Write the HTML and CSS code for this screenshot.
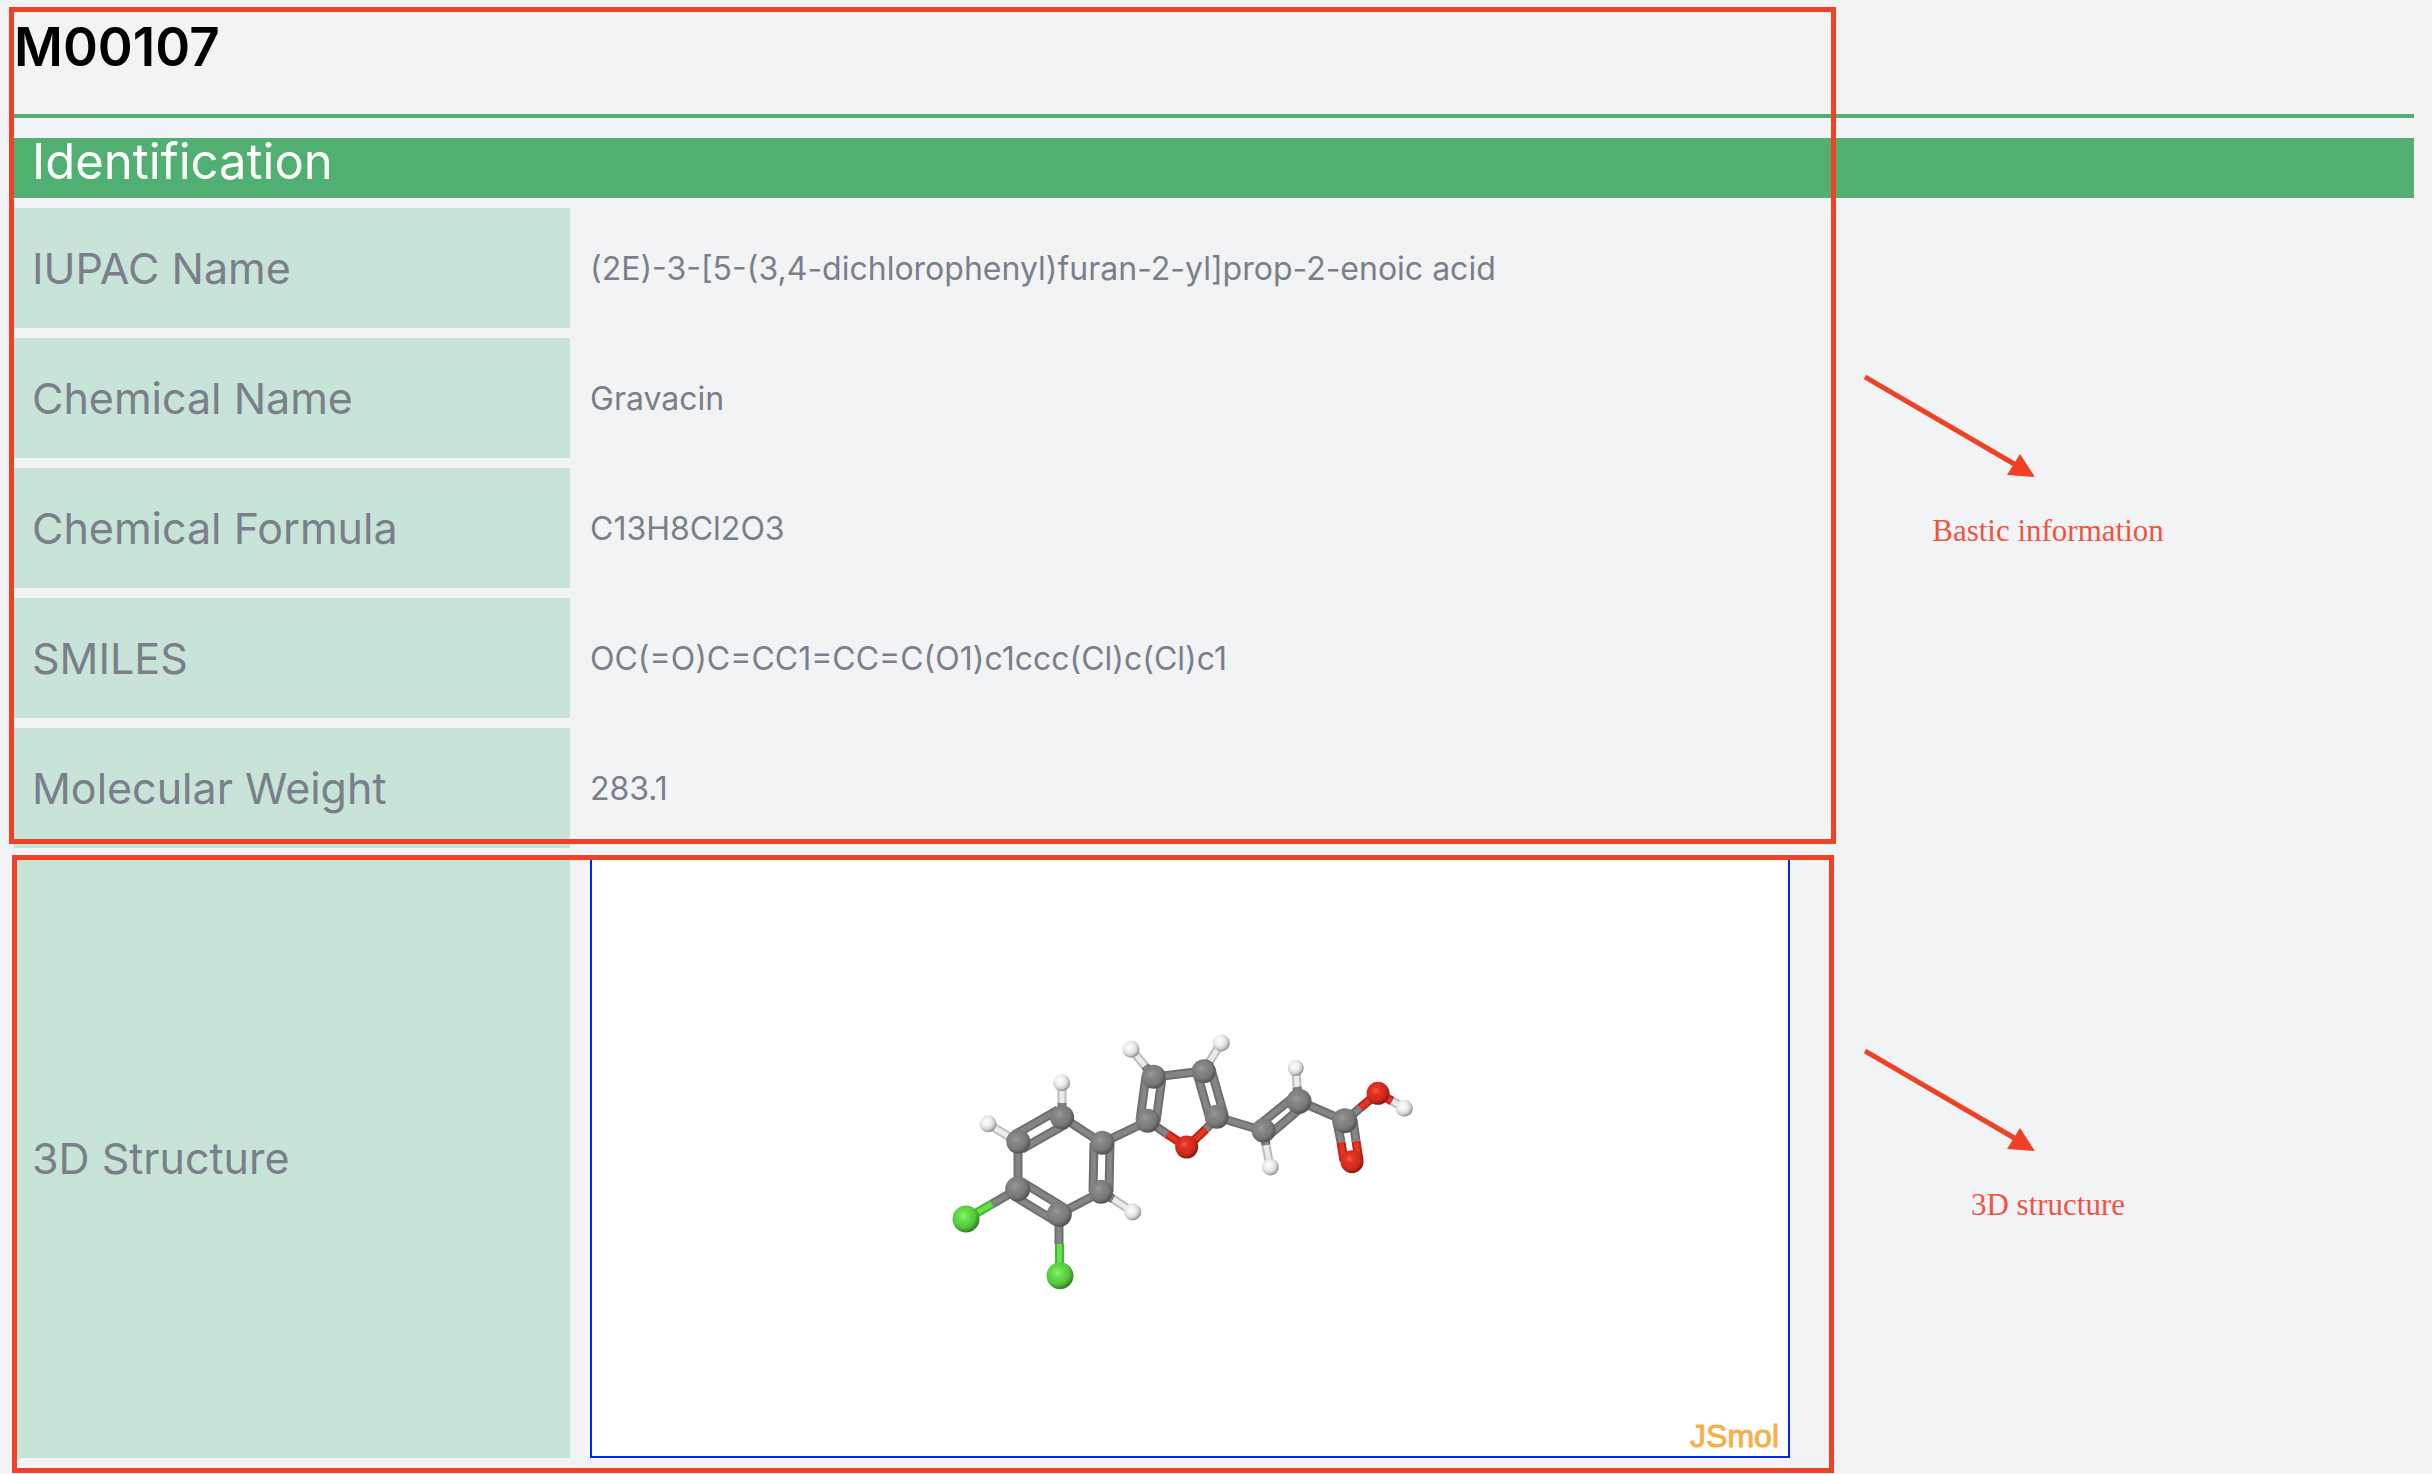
FILE: index.html
```html
<!DOCTYPE html>
<html lang="en">
<head>
  <meta charset="utf-8">
  <meta name="viewport" content="width=device-width, initial-scale=1">
  <title>M00107</title>
  <link rel="stylesheet" href="styles.css">
</head>
<body>
  <main class="entry">
    <h1 class="entry-id">M00107</h1>
    <section class="section">
      <h2 class="section-title">Identification</h2>
      <table class="facts">
        <tbody>
          <tr>
            <th scope="row">IUPAC Name</th>
            <td>(2E)-3-[5-(3,4-dichlorophenyl)furan-2-yl]prop-2-enoic acid</td>
          </tr>
          <tr>
            <th scope="row">Chemical Name</th>
            <td>Gravacin</td>
          </tr>
          <tr>
            <th scope="row">Chemical Formula</th>
            <td>C13H8Cl2O3</td>
          </tr>
          <tr>
            <th scope="row">SMILES</th>
            <td>OC(=O)C=CC1=CC=C(O1)c1ccc(Cl)c(Cl)c1</td>
          </tr>
          <tr>
            <th scope="row">Molecular Weight</th>
            <td>283.1</td>
          </tr>
          <tr>
            <th scope="row">3D Structure</th>
            <td>
              <div class="viewer">
                <svg class="molecule" viewBox="0 0 480 270" role="img" aria-label="Ball and stick model of Gravacin">
                  <defs>
                    <radialGradient id="carbon" cx="0.4" cy="0.38" r="0.62">
                      <stop offset="0" stop-color="#9c9c9c"/>
                      <stop offset="0.25" stop-color="#888888"/>
                      <stop offset="0.7" stop-color="#797979"/>
                      <stop offset="1" stop-color="#545454"/>
                    </radialGradient>
                    <radialGradient id="hydrogen" cx="0.4" cy="0.38" r="0.62">
                      <stop offset="0" stop-color="#ffffff"/>
                      <stop offset="0.5" stop-color="#ebebeb"/>
                      <stop offset="0.8" stop-color="#c6c6c6"/>
                      <stop offset="1" stop-color="#8c8c8c"/>
                    </radialGradient>
                    <radialGradient id="oxygen" cx="0.4" cy="0.38" r="0.62">
                      <stop offset="0" stop-color="#f4584a"/>
                      <stop offset="0.3" stop-color="#e43123"/>
                      <stop offset="0.7" stop-color="#cd2a1e"/>
                      <stop offset="1" stop-color="#8a1a12"/>
                    </radialGradient>
                    <radialGradient id="chlorine" cx="0.4" cy="0.38" r="0.62">
                      <stop offset="0" stop-color="#8af272"/>
                      <stop offset="0.3" stop-color="#66e04b"/>
                      <stop offset="0.7" stop-color="#54c63d"/>
                      <stop offset="1" stop-color="#358324"/>
                    </radialGradient>
                    <path id="bonds-h" d="M58 113L38 101M112 80V60M163 176L183 189M195 43L181 26M260 38L271 20M316 122L320 144M347 64L346 45M442 78L454 85"/>
                    <path id="bonds-cl" d="M42 181L16 196M109.500 221V253"/>
                    <path id="bonds-o" d="M217 111L237 124M256 106L237 124M410 85L428 70L442 78M406 118L409 137M391 119L394 138"/>
                    <path id="bonds-c" d="M68 119V166M112 94L152 120L198 98M151 169L109 191M204 54L254 48M267 94L314 108M349 78L395 98M72 126L116 101M64 112L108 87M160 120L159 169M144 120L143 169M72 159L113 184M64 173L105 198M206 99L212 55M190 97L196 53M261 46L274 92M247 50L260 96M318 113L353 83M309 102L345 73M403 97L406 118M387 99L391 119M68 166L42 181M109 191V221M198 98L217 111M267 94L256 106M395 98L410 85M68 119L58 113M112 94V80M151 169L163 176M204 54L195 43M254 48L260 38M314 108L316 122M349 78L347 64"/>
                  </defs>
                  <g class="bonds">
                    <use href="#bonds-h" class="edge edge-h"/>
                    <use href="#bonds-h" class="core core-h"/>
                    <use href="#bonds-cl" class="edge edge-cl"/>
                    <use href="#bonds-cl" class="core core-cl"/>
                    <use href="#bonds-o" class="edge edge-o"/>
                    <use href="#bonds-o" class="core core-o"/>
                    <use href="#bonds-c" class="edge edge-c"/>
                    <use href="#bonds-c" class="core core-c"/>
                  </g>
                  <g fill="url(#carbon)">
                    <circle cx="68.300" cy="118.700" r="12"/>
                    <circle cx="112" cy="94.300" r="12"/>
                    <circle cx="152.300" cy="119.700" r="12"/>
                    <circle cx="151" cy="168.700" r="12"/>
                    <circle cx="109.300" cy="191.300" r="12.500"/>
                    <circle cx="67.700" cy="166" r="12.500"/>
                    <circle cx="197.700" cy="97.700" r="12"/>
                    <circle cx="203.700" cy="53.700" r="12"/>
                    <circle cx="253.700" cy="48.300" r="12"/>
                    <circle cx="266.700" cy="93.700" r="12"/>
                    <circle cx="313.500" cy="107.500" r="12"/>
                    <circle cx="349" cy="78.300" r="12.500"/>
                    <circle cx="394.700" cy="97.700" r="12.500"/>
                  </g>
                  <g fill="url(#hydrogen)">
                    <circle cx="38" cy="100.700" r="8.500"/>
                    <circle cx="111.700" cy="59.700" r="8.500"/>
                    <circle cx="182.700" cy="189" r="8.500"/>
                    <circle cx="181" cy="26.300" r="8.500"/>
                    <circle cx="271.300" cy="20" r="8.500"/>
                    <circle cx="320.300" cy="144" r="8.500"/>
                    <circle cx="345.700" cy="45" r="8"/>
                    <circle cx="454.300" cy="85.300" r="8.500"/>
                  </g>
                  <g fill="url(#oxygen)">
                    <circle cx="236.700" cy="124" r="11.500"/>
                    <circle cx="428" cy="70.300" r="11.500"/>
                    <circle cx="402" cy="138.700" r="11.500"/>
                  </g>
                  <g fill="url(#chlorine)">
                    <circle cx="16" cy="196" r="13.500"/>
                    <circle cx="110" cy="252.700" r="13.500"/>
                  </g>
                </svg>
                <span class="viewer-brand">JSmol</span>
              </div>
            </td>
          </tr>
        </tbody>
      </table>
    </section>
  </main>

  <div class="frame frame-info"></div>
  <div class="frame frame-structure"></div>

  <div class="callout callout-info">
    <svg class="arrow" viewBox="0 0 172 104" aria-hidden="true">
      <path d="M1 2L152 90" stroke="#ee4126" stroke-width="5"/>
      <path d="M171 102L156 79L143 100Z" fill="#ee4126"/>
    </svg>
    <span class="callout-text">Bastic information</span>
  </div>
  <div class="callout callout-structure">
    <svg class="arrow" viewBox="0 0 172 104" aria-hidden="true">
      <path d="M1 2L152 90" stroke="#ee4126" stroke-width="5"/>
      <path d="M171 102L156 79L143 100Z" fill="#ee4126"/>
    </svg>
    <span class="callout-text">3D structure</span>
  </div>
</body>
</html>
```
FILE: styles.css
```css
* {
  box-sizing: border-box;
}

body {
  position: relative;
  min-height: 100vh;
  margin: 0;
  background: #f1f3f5;
  color: #7a7f8a;
  font-family: Inter, "Liberation Sans", sans-serif;
  font-size: 32px;
}

.entry {
  padding: 16px 18px 0 14px;
}

.entry-id {
  margin: 0 0 20px;
  padding-bottom: 36px;
  border-bottom: 4px solid #51af71;
  color: #000;
  font-size: 53px;
  font-weight: 600;
  line-height: 62px;
}

.section-title {
  margin: 0;
  padding: 0 18px 12px;
  background: #51af71;
  color: #fff;
  font-size: 49px;
  font-weight: 400;
  line-height: 48px;
}

.facts {
  width: 100%;
  table-layout: fixed;
  border-collapse: separate;
  border-spacing: 0 10px;
}

.facts th,
.facts td {
  height: 120px;
  padding: 0 20px;
  vertical-align: middle;
  text-align: left;
}

.facts th {
  width: 556px;
  padding: 0 18px;
  background: #c8e4d8;
  font-size: 43px;
  font-weight: 400;
}

.facts td {
  overflow-wrap: anywhere;
}

.viewer {
  display: grid;
  place-items: center;
  width: 1200px;
  max-width: 100%;
  height: 600px;
  border: 2px solid #0027f5;
  background: #fff;
}

.molecule {
  grid-area: 1 / 1;
  width: 480px;
  height: 270px;
}

.bonds {
  fill: none;
}

.edge {
  stroke-width: 9px;
}

.core {
  stroke-width: 5px;
}

.edge-h { stroke: #bcbcbc; }
.core-h { stroke: #ebebeb; }
.edge-cl { stroke: #48b233; }
.core-cl { stroke: #66e04b; }
.edge-o { stroke: #bd2318; }
.core-o { stroke: #e63323; }
.edge-c { stroke: #6e6e6e; }
.core-c { stroke: #858585; }

.viewer-brand {
  grid-area: 1 / 1;
  place-self: end;
  padding: 0 9px 4px 0;
  color: #f3b04c;
  font-family: "Liberation Sans", sans-serif;
  font-size: 32px;
  line-height: 32px;
  -webkit-text-stroke: 1px #f3b04c;
}

/* Annotations drawn over the page */
.frame {
  position: absolute;
  border: 5px solid #ee4126;
  pointer-events: none;
}

.frame-info {
  top: 7px;
  left: 9px;
  width: 1827px;
  height: 837px;
}

.frame-structure {
  top: 855px;
  left: 12px;
  width: 1822px;
  height: 618px;
}

.callout {
  position: absolute;
  left: 1864px;
  display: flex;
  flex-direction: column;
  gap: 34px;
  width: 368px;
  color: #ef5443;
  font-family: "Liberation Serif", serif;
  font-size: 31px;
  line-height: 36px;
  text-align: center;
}

.callout-info {
  top: 375px;
}

.callout-structure {
  top: 1049px;
}

.arrow {
  width: 172px;
  height: 104px;
}
```
